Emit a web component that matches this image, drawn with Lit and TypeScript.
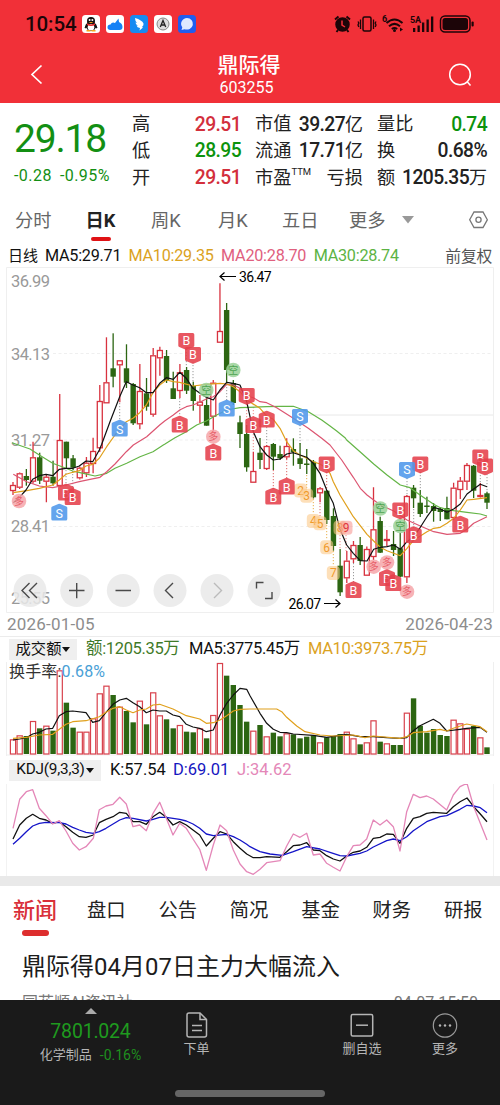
import { LitElement, html, svg, css } from "lit";
import { customElement } from "lit/decorators.js";

type Pt = [number, number];
const STEP = 6.676;
const X0 = 13;
const cx = (i: number) => X0 + STEP * i;

// up flag, body top, body bottom, wick top, wick bottom
const CANDLES: [number, number, number, number, number][] = [
  [1, 485, 491, 482, 495], [1, 473.3, 487.7, 472.5, 489], [0, 476, 480, 469, 485.7], [1, 457.3, 481.7, 441.7, 483.5],
  [0, 457.3, 480.7, 452.7, 484], [1, 476.7, 481.7, 475, 502.3], [0, 476.7, 483.3, 460.7, 485.7], [1, 440, 486, 394, 486],
  [0, 441.7, 458.3, 441.7, 468], [0, 458.3, 467.7, 455, 470], [1, 467.7, 478.3, 466.5, 479.5], [1, 462.7, 473.3, 457, 477],
  [1, 451, 464, 437.7, 473.3], [1, 401, 448.3, 385, 452], [1, 382.3, 403.3, 337.3, 403.3], [0, 368.3, 376.7, 333.3, 387.3],
  [1, 360.3, 365.3, 360.3, 402.3], [0, 368.3, 382.7, 344.3, 388], [0, 384, 423.3, 383, 425], [1, 391, 424.3, 364, 429.3],
  [0, 393.3, 406.7, 378, 410.7], [1, 355.3, 414.7, 348, 416.7], [1, 350, 358.3, 346.7, 375.7], [0, 356, 381, 350, 383],
  [0, 388.3, 399, 371.7, 399], [1, 372.3, 391, 364, 398], [0, 370, 390.7, 367, 394], [0, 386, 401, 381.7, 410.7],
  [1, 401.7, 405.7, 395, 423], [0, 405, 425.7, 396.7, 425.7], [1, 382.7, 416.7, 380, 431], [1, 331, 342.7, 283.3, 342.7],
  [0, 310, 370, 303, 383], [0, 383, 403, 380, 405], [0, 422.3, 434, 415.7, 448], [0, 434, 467.3, 425, 471.7],
  [1, 471, 482.7, 451.7, 482.7], [0, 452.7, 460, 438, 469], [1, 446, 469, 445, 470], [0, 444, 456.7, 443, 470],
  [0, 454, 458.3, 445.7, 460], [1, 446, 457.3, 438.3, 459.3], [0, 449, 452, 438.3, 465.7], [0, 458.3, 464, 443, 469],
  [0, 463.5, 465, 449, 474], [0, 461.7, 497.3, 460, 498.5], [1, 488.3, 493.3, 487, 502.3], [0, 490.7, 520, 490, 524],
  [0, 516, 546, 508.3, 550.7], [0, 565.7, 592.3, 549, 596], [1, 560.7, 578.3, 551, 583], [1, 545, 559.3, 541, 563],
  [0, 545, 561, 537, 565], [1, 549, 575.7, 546.5, 575.7], [1, 529.3, 557, 487.3, 560], [0, 521, 552.7, 516.7, 553],
  [1, 539, 541, 530, 546], [0, 544, 550, 531, 556], [0, 548.3, 576.7, 533, 577], [1, 496, 577.3, 495, 583],
  [0, 487.7, 498.3, 485, 508], [0, 502.7, 514, 490, 517], [0, 505.5, 507, 496.7, 513], [0, 506, 511, 503, 521.7],
  [0, 509, 512, 507, 521], [0, 508, 519.3, 496.7, 519.3], [1, 487.7, 518, 482.7, 520], [1, 480.7, 490, 477, 499],
  [1, 465, 481.7, 463, 490], [0, 465.7, 490.7, 465, 498], [1, 495, 496.7, 483, 497.5], [0, 493.3, 502.7, 491.7, 509],
];

// turnover bar tops, in thirds of a pixel below the panel origin (y = 635)
const VOLUME = [
  313, 301, 303, 258, 280, 272, 287, 106, 203, 278, 290, 290, 250, 175, 152, 180, 215, 228, 262, 197, 268, 172, 241, 253,
  280, 270, 290, 292, 280, 310, 240, 84, 122, 150, 210, 260, 287, 270, 304, 293, 304, 295, 298, 310, 305, 302, 322, 307,
  303, 297, 290, 310, 328, 322, 256, 320, 325, 330, 330, 233, 190, 272, 293, 282, 300, 303, 254, 265, 281, 273, 307, 337,
];

const seg = (ox: number, oy: number, ...v: number[]): Pt[] => {
  const out: Pt[] = [];
  for (let i = 0; i < v.length; i += 2) out.push([ox + v[i] / 3, oy + v[i + 1] / 3]);
  return out;
};

const poly = (p: Pt[], color: string, w = 1.2) =>
  svg`<polyline points=${p.map(([x, y]) => `${x.toFixed(1)},${y.toFixed(1)}`).join(" ")} fill="none" stroke=${color} stroke-width=${w} stroke-linejoin="round"/>`;

const MA5 = [
  ...seg(0, 440, 40, 188, 60, 170, 78, 150, 98, 118, 118, 107, 138, 103, 158, 107, 178, 88, 198, 85, 218, 85, 238, 78, 258, 63, 278, 65, 298, 30),
  ...seg(0, 265, 305, 538, 330, 470, 359, 395, 379, 350, 399, 360, 419, 368, 439, 383, 459, 383, 479, 355, 499, 338),
  ...seg(165, 265, 25, 343, 44, 322, 64, 340, 84, 370, 104, 384, 124, 397, 145, 405, 165, 375, 185, 352, 205, 355, 225, 360, 245, 410, 265, 500),
  ...seg(165, 440, 285, 20, 305, 45, 325, 60, 345, 57, 365, 42, 385, 38, 405, 45, 425, 52, 445, 70, 465, 100, 485, 150),
  ...seg(330, 440, 10, 190, 30, 268, 50, 315, 70, 340, 91, 362, 111, 363, 131, 328, 151, 322, 171, 320, 191, 315, 211, 328, 231, 305, 251, 290, 271, 262, 291, 230, 311, 203, 331, 207, 351, 217, 371, 207, 391, 192, 411, 162, 431, 147, 451, 133, 471, 140),
];
const MA10 = [
  ...seg(0, 440, 40, 158, 80, 152, 118, 145, 158, 135, 178, 120, 198, 103, 218, 97, 238, 92, 258, 78, 278, 73, 298, 55, 320, 20),
  ...seg(0, 265, 345, 510, 379, 470, 399, 460, 419, 443, 439, 420, 459, 383, 479, 360, 499, 345),
  ...seg(165, 265, 25, 350, 44, 352, 84, 363, 124, 358, 165, 355, 185, 357, 205, 365, 225, 380, 245, 405, 285, 430, 305, 453, 325, 463, 345, 490),
  ...seg(165, 440, 365, 5, 385, 32, 405, 45, 425, 55, 445, 65, 465, 72, 485, 85),
  ...seg(330, 440, 0, 100, 10, 125, 30, 165, 70, 230, 111, 283, 131, 303, 151, 322, 171, 332, 191, 340, 211, 347, 231, 325, 251, 300, 271, 288, 291, 275, 311, 265, 331, 262, 351, 250, 371, 235, 391, 210, 411, 180, 431, 178, 471, 173),
];
const MA20 = [
  ...seg(0, 440, 40, 103, 80, 125, 118, 138, 158, 143, 198, 135, 238, 125, 270, 118, 300, 112, 320, 95, 345, 72, 379, 35),
  ...seg(0, 265, 400, 540, 440, 515, 479, 480),
  ...seg(165, 265, 0, 467, 25, 450, 44, 435, 64, 425, 84, 420, 104, 412, 124, 402, 145, 395, 165, 380, 185, 358, 205, 360, 225, 370, 245, 392, 265, 398, 285, 410, 305, 413, 335, 428, 385, 460, 430, 490, 470, 520),
  ...seg(330, 440, 0, 15, 35, 60, 70, 112, 91, 145, 111, 165, 151, 195, 191, 213, 231, 240, 271, 258, 311, 275, 351, 283, 391, 280, 411, 268, 431, 250, 471, 230),
];
const MA30 = [
  ...seg(0, 440, 36, 8, 90, 27, 118, 45, 158, 70, 198, 85, 218, 93, 250, 100, 285, 108, 320, 100, 345, 85, 380, 70, 420, 50, 459, 35, 490, 15),
  ...seg(165, 265, 0, 537, 30, 518, 64, 500, 95, 480, 124, 468, 155, 450, 185, 435, 225, 428, 305, 425, 345, 424, 385, 424, 430, 440, 470, 465),
  ...seg(330, 265, 0, 483, 20, 498, 45, 518),
  ...seg(330, 440, 50, 0, 90, 35, 131, 72, 171, 105, 211, 135, 240, 143, 270, 165, 311, 193, 331, 203, 351, 208, 371, 212, 411, 217, 451, 222, 471, 228),
];
const VMA5 = [
  ...seg(0, 635, 39, 315, 59, 312, 79, 308, 98, 297, 118, 292, 138, 282, 158, 280, 178, 242, 198, 230, 218, 228, 258, 233, 278, 262, 298, 257, 318, 232, 339, 208, 359, 195, 379, 190, 399, 203, 419, 215, 439, 233, 459, 225, 479, 228, 499, 228, 519, 240, 539, 245, 559, 268, 579, 276, 599, 280, 619, 290, 640, 285, 660, 240, 680, 205, 700, 180, 720, 160, 740, 163),
  ...seg(250, 635, 0, 182, 30, 235, 50, 265, 70, 283, 90, 292, 110, 293, 130, 297, 190, 301, 230, 307, 290, 298, 330, 305, 370, 305, 410, 308, 450, 310, 470, 308, 490, 287, 510, 272, 550, 253, 570, 265, 590, 288, 630, 283, 650, 280, 690, 277, 711, 292),
];
const VMA10 = [
  ...seg(0, 635, 39, 310, 79, 307, 118, 300, 158, 298, 198, 268, 218, 260, 258, 257, 298, 245, 318, 232, 339, 220, 359, 215, 379, 225, 399, 233, 419, 225, 439, 222, 459, 210, 479, 208, 519, 222, 559, 242, 599, 252, 619, 265, 640, 263, 660, 255, 680, 242, 700, 228, 720, 223),
  ...seg(250, 635, 0, 222, 80, 222, 95, 230, 110, 247, 140, 273, 165, 290, 210, 300, 250, 303, 310, 300, 345, 308, 370, 303, 450, 310, 470, 305, 490, 293, 530, 290, 570, 283, 590, 288, 610, 280, 650, 267, 690, 275, 711, 290),
];
const K = [
  ...seg(0, 635, 39, 612, 59, 570, 79, 550, 98, 538, 118, 550, 138, 555, 158, 565, 178, 560, 198, 575, 218, 592, 238, 605, 258, 607, 280, 600, 298, 563, 318, 553, 339, 545, 359, 532, 379, 535, 399, 560, 419, 560, 439, 568, 459, 545, 479, 532, 499, 547, 519, 570, 539, 560, 559, 570, 579, 585, 599, 600, 619, 633, 640, 610, 660, 590, 680, 597, 700, 620, 720, 640, 740, 657),
  ...seg(250, 635, 10, 668, 30, 668, 50, 665, 90, 667, 110, 650, 130, 632, 150, 630, 170, 623, 190, 645, 210, 647, 230, 662, 250, 672, 270, 678, 290, 663, 310, 652, 330, 648, 350, 637, 370, 610, 390, 607, 410, 597, 430, 598, 450, 625, 470, 580, 490, 550, 510, 545, 530, 535, 550, 532, 590, 535, 610, 515, 630, 500, 651, 489, 671, 515, 691, 537, 711, 560),
];
const D = [
  ...seg(0, 635, 39, 628, 59, 610, 79, 590, 98, 573, 118, 565, 138, 562, 178, 563, 198, 567, 218, 577, 238, 585, 258, 592, 280, 595, 298, 590, 318, 580, 359, 555, 379, 548, 399, 550, 439, 558, 459, 553, 479, 547, 499, 547, 539, 553, 559, 558, 579, 567, 599, 580, 619, 597, 640, 602, 680, 598, 700, 605, 720, 615, 740, 628),
  ...seg(250, 635, 0, 635, 30, 650, 60, 657, 97, 661, 130, 650, 170, 635, 210, 642, 240, 652, 270, 662, 290, 663, 330, 655, 350, 648, 370, 636, 410, 617, 430, 612, 450, 617, 470, 605, 490, 587, 530, 560, 570, 545, 590, 542, 630, 523, 651, 511, 671, 513, 691, 518, 711, 533),
];
const J = [
  ...seg(0, 635, 39, 580, 59, 493, 79, 470, 98, 464, 118, 520, 138, 542, 158, 567, 178, 557, 198, 588, 218, 625, 238, 645, 258, 635, 280, 610, 298, 524, 318, 513, 339, 508, 359, 487, 379, 507, 399, 575, 419, 570, 439, 587, 459, 535, 479, 502, 499, 550, 519, 600, 539, 565, 559, 580, 579, 612, 599, 643, 619, 706, 640, 630, 660, 570, 680, 587, 700, 645, 720, 687, 740, 710),
  ...seg(250, 635, 10, 718, 30, 703, 50, 683, 90, 677, 110, 633, 130, 597, 150, 607, 170, 595, 190, 660, 210, 657, 230, 685, 250, 697, 270, 708, 290, 665, 310, 632, 330, 630, 350, 612, 370, 555, 390, 570, 410, 555, 430, 575, 450, 648, 470, 530, 490, 478, 510, 488, 530, 483, 550, 492, 590, 525, 610, 480, 630, 455, 651, 445, 671, 515, 711, 615),
];

// label, x, y, tip direction (-1 up, 1 down)
const FLAGS: [string, number, number, number][] = [
  ["B", 186.3, 341, 1], ["B", 193, 355, 1], ["B", 179.7, 424.5, -1], ["B", 253.3, 425, -1], ["B", 246.7, 396, 1],
  ["B", 266.7, 419.5, -1], ["B", 213.3, 452.5, -1], ["B", 273.3, 496.5, -1], ["B", 286.7, 486.5, -1], ["B", 326.7, 464.5, 1],
  ["B", 420.3, 464.5, 1], ["B", 400.3, 510.5, 1], ["B", 413.7, 535, -1], ["B", 460.3, 524.5, -1], ["B", 480.3, 457.5, 1],
  ["B", 485, 466.5, 1], ["B", 353.5, 590, -1], ["B", 387, 578, -1], ["B", 393.3, 583, -1], ["B", 66, 492.5, -1], ["B", 72.7, 497, -1],
  ["S", 119.7, 428.5, -1], ["S", 226.7, 408.5, -1], ["S", 300, 417, 1], ["S", 59.3, 512.5, -1], ["S", 407, 470, 1],
];
const DOTS: [string, number, number][] = [
  ["空", 206.3, 390], ["空", 233.3, 370], ["空", 380.3, 508.5], ["空", 400.3, 526],
  ["多", 213.3, 436.7], ["多", 19, 501], ["多", 373.7, 566.7], ["多", 387, 562.5], ["多", 407, 591.7],
];
const COUNTS: [string, number, number][] = [
  ["2", 300.5, 490.5], ["3", 306.7, 495.7], ["4", 313.3, 521], ["5", 320, 523.3], ["6", 326.7, 547.3], ["7", 333.3, 573], ["8", 340, 527.7], ["9", 346, 527.7],
];
// x, y1, y2, colour
const LEADERS: [number, number, number, string][] = [
  [66, 470, 486, "#999"], [72.7, 471, 490, "#999"], [119.7, 403, 420, "#999"], [186.3, 349, 367, "#999"], [193, 362, 382, "#999"],
  [179.7, 398, 416, "#999"], [226.7, 384, 401, "#999"], [253.3, 404, 450, "#e88"], [246.7, 404, 425, "#e88"], [266.7, 427, 452, "#999"],
  [273.3, 470, 489, "#d66"], [286.7, 459, 479, "#d66"], [300, 425, 446, "#999"], [326.7, 472, 490, "#d66"], [306.7, 475, 488, "#e9b04c"],
  [313.3, 499, 514, "#e9b04c"], [320, 503, 516, "#d66"], [326.7, 525, 540, "#e9b04c"], [333.3, 551, 566, "#e9b04c"], [340, 535, 549, "#e88"],
  [346, 535, 551, "#e88"], [353.5, 563, 582, "#999"], [420.3, 472, 490, "#999"], [407, 478, 495, "#999"], [413.7, 509, 528, "#999"],
  [480.3, 466, 483, "#999"], [487, 474, 492, "#999"], [400.3, 518, 533, "#999"],
];

const flag = ([t, x, y, d]: [string, number, number, number]) => svg`
  <g transform="translate(${x} ${y})">
    <path transform="scale(1 ${d})" d="M-6.5 -8 H6.500 Q8 -8 8 -6.500 V4.800 Q8 5.600 7 6 L1 8.600 Q0 9 -1 8.600 L-7 6 Q-8 5.600 -8 4.800 V-6.500 Q-8 -8 -6.500 -8Z"
      fill=${t === "B" ? "#e5404b" : "#4f97ea"} fill-opacity=".88"/>
    <text y=${d > 0 ? 4 : 5} text-anchor="middle" font-size="12.5" fill="#fff">${t}</text>
  </g>`;

@customElement("app-root")
export class AppRoot extends LitElement {
  static styles = css`
    :host { display: block; width: 500px; height: 1105px; overflow: hidden; background: #fff; color: #222;
      font-family: Roboto, "Noto Sans CJK SC", sans-serif; line-height: 1; }
    svg { display: block; }
    svg text { font-family: Roboto, "Noto Sans CJK SC", sans-serif; }
    .page { display: flex; flex-direction: column; height: 1105px; }
    .top { background: #f13038; height: 103px; flex: none; }
    .status { display: flex; align-items: center; height: 48px; padding: 0 24px 0 25px; box-sizing: border-box; }
    .time { font-size: 20.5px; font-weight: 500; color: #1c0508; width: 57px; letter-spacing: -.1px; white-space: nowrap; }
    .apps { display: flex; gap: 6px; flex: 1; }
    .nav { display: grid; grid-template-columns: 60px 1fr 60px; height: 53px; align-items: center; color: #fff; padding: 0 10px 0 7px; }
    .nav .ttl { display: flex; flex-direction: column; align-items: center; gap: 4px; padding-left: 1px; padding-top: 1px; }
    .nav .name { font-size: 21px; font-weight: 500; }
    .nav .code { font-size: 16px; margin-right: 5px; }
    .nav .l { justify-self: center; } .nav .r { justify-self: center; }
    .quote { display: flex; height: 94px; flex: none; padding: 0 13px 0 14px; box-sizing: border-box; }
    .price { width: 118px; flex: none; color: #138f13; }
    .big { font-size: 39px; padding-top: 17px; letter-spacing: -1.2px; }
    .chg { display: flex; gap: 8px; font-size: 16px; letter-spacing: .45px; padding-top: 9px; }
    .col { padding-top: 8px; flex: none; }
    .c1 { width: 109px; } .c2 { width: 108px; margin-left: 14px; } .c3 { width: 110px; margin-left: 14px; }
    .row { display: flex; justify-content: space-between; align-items: center; height: 26.7px; font-size: 18.2px; white-space: nowrap; }
    .v { font-size: 19.3px; font-weight: 500; letter-spacing: -.6px; }
    .v i { font-style: normal; font-weight: 400; font-size: 18px; letter-spacing: 0; }
    .red { color: #d32f3c; } .green { color: #0c930c; }
    sup { font-size: 9.5px; vertical-align: 9px; line-height: 0; }
    .tabs { display: flex; height: 47px; flex: none; align-items: flex-start; padding: 5px 12px 0 15px; box-sizing: border-box; color: #666; font-size: 18.3px; }
    .tab { height: 40px; line-height: 38px; box-sizing: border-box; white-space: nowrap; display: flex; flex-direction: column; align-items: flex-start; }
    .tab span { height: 35px; }
    .tab.on { color: #222; font-weight: 700; align-items: center; }
    .tab.on b { width: 20px; height: 4px; border-radius: 2px; background: #e01215; flex: none; }
    .legend { display: flex; height: 23px; flex: none; align-items: center; padding: 2px 8px 0; box-sizing: border-box; font-size: 16.2px; color: #111; white-space: nowrap; letter-spacing: -.25px; }
    .legend span:first-child { font-size: 15px; width: 37px; letter-spacing: 0; }
    .legend .m5 { width: 83.500px; } .legend .m { width: 92.600px; }
    .legend .last { margin-left: auto; color: #555; font-size: 15.8px; }
    .or { color: #dba21e; } .pk { color: #e0607e; } .gr { color: #5cb344; }
    .dates { display: flex; justify-content: space-between; align-items: center; height: 23px; flex: none; padding: 0 7px; color: #8d8d8d; font-size: 17px; letter-spacing: .2px; }
    .sub { display: flex; align-items: center; flex: none; padding: 0 9px; font-size: 16.5px; white-space: nowrap; color: #111; }
    .vh { height: 26px; box-sizing: border-box; border-top: 1px solid #ececec; }
    .vh > span { letter-spacing: -.35px; }
    .kh { height: 28px; }
    .btn { background: #efefef; display: flex; align-items: center; justify-content: center; gap: 1px; height: 21px; font-size: 15.3px; flex: none; }
    .kh .btn { letter-spacing: -.2px; }
    .btn i { border: 4px solid transparent; border-top: 5px solid #111; border-bottom: 0; }
    .sep { height: 10px; background: #e9e9e9; flex: none; }
    .ntabs { display: flex; flex: none; height: 50px; padding-left: 13px; font-size: 19.3px; color: #222; }
    .ntabs div { width: 71.4px; line-height: 50px; white-space: nowrap; flex: none; }
    .ntabs .on { width: 74px; font-size: 22px; font-weight: 500; color: #d9303a; display: flex; flex-direction: column; }
    .ntabs .on span { height: 44px; line-height: 49px; }
    .ntabs .on b { width: 27px; height: 6px; margin-left: 9px; border-radius: 3px; background: #dd2e2e; flex: none; }
    .news { flex: 1; min-height: 0; overflow: hidden; padding: 18px 22px 0; }
    .headline { font-size: 23.9px; line-height: 26px; letter-spacing: .1px; white-space: nowrap; color: #1c1c1c; }
    .meta { display: flex; justify-content: space-between; font-size: 16px; line-height: 20px; color: #777; margin-top: 13px; }
    .bar { background: #1a1a1a; height: 105px; flex: none; display: flex; flex-direction: column; color: #b5b5b5; }
    .acts { display: grid; grid-template-columns: 181px 31px 99px 102px 64px; height: 90px; font-size: 13px; }
    .act { display: flex; flex-direction: column; align-items: center; white-space: nowrap; }
    .act svg { margin: 12px 0 4px; }
    .idx { color: #1f9a1f; font-size: 19.5px; letter-spacing: -.2px; margin-top: 8px; }
    .pct { display: flex; gap: 8px; margin-top: 6px; align-items: center; color: #b5b5b5; }
    .pct em { font-style: normal; color: #1f8f1f; font-size: 14px; }
    .tri { border: 6px solid transparent; border-bottom: 6px solid #aaa; border-top: 0; margin-top: 8px; }
    .home { width: 150px; height: 7px; border-radius: 4px; background: #666; align-self: center; }
  `;

  private kline() {
    return html`<svg width="500" height="346" viewBox="0 267 500 346">
      <g fill="none" stroke="#efefef">
        <path d="M6.500 612.500V267.500H493.500V612.500Z"/>
        <path d="M300 415H493" stroke="#e8e8e8"/>
        <path d="M53 353.500H493M53 440H493M53 526.500H493" stroke-dasharray="3 2.500"/>
      </g>
      <g font-size="16.5" fill="#999">
        <text x="11" y="286.500" textLength="39">36.99</text>
        <text x="11" y="359.500" textLength="39">34.13</text>
        <text x="11" y="446" textLength="39">31.27</text>
        <text x="11" y="532" textLength="39">28.41</text>
        <text x="11" y="604" textLength="39">25.55</text>
      </g>
      ${LEADERS.map(([x, a, b, c]) => svg`<path d="M${x} ${a}V${b}" stroke=${c} stroke-dasharray="1.2 1.8"/>`)}
      ${CANDLES.map(([up, t, b, wt, wb], i) => {
        const x = cx(i);
        return up
          ? svg`<g stroke="#d8323f" stroke-width="1.3"><path d="M${x} ${wt}V${t}M${x} ${b}V${wb}"/>
              <rect x=${x - 2.5} y=${t + 0.5} width="5" height=${Math.max(1, b - t - 1)} fill="#fff"/></g>`
          : svg`<g fill="#2c6612"><rect x=${x - 0.65} y=${wt} width="1.3" height=${wb - wt}/>
              <rect x=${x - 2.7} y=${t} width="5.4" height=${b - t}/></g>`;
      })}
      ${poly(MA30, "#64b546")}${poly(MA20, "#dc5571")}${poly(MA10, "#e0a01c")}${poly(MA5, "#111")}
      ${DOTS.map(([t, x, y]) => {
        const g = t === "空";
        return svg`<circle cx=${x} cy=${y} r="7.3" fill=${g ? "#9ad198" : "#f6a6a9"} fill-opacity=".85"/>
          <text x=${x} y=${y + 3.6} text-anchor="middle" font-size="10" fill=${g ? "#4fa551" : "#e8606a"}>${t}</text>`;
      })}
      ${COUNTS.map(([t, x, y]) => svg`
        <rect x=${x - 6.5} y=${y - 7} width="13" height="14" rx="4" fill=${t === "9" ? "#f79a94" : "#fcc98a"} fill-opacity=".6"/>
        <text x=${x} y=${y + 4.2} text-anchor="middle" font-size="12" fill=${t === "9" ? "#e0343c" : "#f09a2c"}>${t}</text>`)}
      ${FLAGS.map(flag)}
      <g fill="none" stroke="#000" stroke-width="1.2">
        <path d="M236 276.500H220M224.500 272.500L220 276.500L224.500 280.500"/>
        <path d="M324 603.500H340M335.500 599.500L340 603.500L335.500 607.500"/>
      </g>
      <g font-size="14" fill="#000">
        <text x="239" y="281.500" textLength="32.500">36.47</text>
        <text x="288.500" y="608.500" textLength="32.500">26.07</text>
      </g>
      ${[30, 76.7, 123.3, 170, 217, 264].map((x) => svg`<circle cx=${x} cy="590.5" r="16.5" fill="#e9e9e9" fill-opacity=".85"/>`)}
      <g fill="none" stroke="#4a4a4a" stroke-width="1.4">
        <path d="M29.500 583L22 590.500L29.500 598M37 583L29.500 590.500L37 598"/>
        <path d="M69 590.500H84.500M76.700 583V598.300M115.500 590.500H131"/>
        <path d="M173 583L165.500 590.500L173 598"/>
        <path d="M214 583L221.500 590.500L214 598" stroke="#bbb"/>
        <path d="M256.500 588.500V582.500H263.500M272 592V598.500H265"/>
      </g>
    </svg>`;
  }

  private volume() {
    return html`<svg width="500" height="94" viewBox="0 662 500 94">
      <path d="M6.500 662V756M493.500 662V756M6 755H494" stroke="#efefef"/>
      ${VOLUME.map((v, i) => {
        const y = 635 + v / 3;
        const x = cx(i);
        return CANDLES[i][0]
          ? svg`<rect x=${x - 2.6} y=${y + 0.5} width="5.2" height=${753.5 - y} fill="#fff" fill-opacity=".7" stroke="#d8424d" stroke-width="1.2"/>`
          : svg`<rect x=${x - 2.7} y=${y} width="5.4" height=${754 - y} fill="#2c6612"/>`;
      })}
      <text x="9" y="677" font-size="16" fill="#333" textLength="96">换手率:<tspan fill="#4a9fd6">0.68%</tspan></text>
      ${poly(VMA5, "#111")}${poly(VMA10, "#e0a01c")}
    </svg>`;
  }

  private kdj() {
    return html`<svg width="500" height="92" viewBox="0 784 500 92">
      <path d="M6.500 784V876M493.500 784V876" stroke="#f2f2f2"/>
      ${poly(K, "#111", 1.3)}${poly(D, "#1414c8", 1.3)}${poly(J, "#e487b8", 1.3)}
    </svg>`;
  }

  render() {
    return html`<div class="page">
      <div class="top">
        <div class="status">
          <span class="time">10:54</span>
          <div class="apps">
            <svg width="18" height="18" viewBox="0 0 18 18"><rect width="18" height="18" rx="3.5" fill="#fff"/><ellipse cx="9" cy="11" rx="5" ry="5" fill="#111"/><path d="M4.500 9L3 13L5 12M13.500 9L15 13L13 12" fill="#111" stroke="#111"/><circle cx="9" cy="6" r="4" fill="#111"/><ellipse cx="9" cy="12.300" rx="3.300" ry="3.300" fill="#fff"/><circle cx="7.600" cy="5" r="1" fill="#fff"/><circle cx="10.400" cy="5" r="1" fill="#fff"/><path d="M5 8.300Q9 10.500 13 8.300V10Q9 12 5 10Z" fill="#e02828"/><path d="M6.500 7H11.500L9 8.200Z" fill="#f6a51c"/><path d="M4.500 15.800H8.500M9.500 15.800H13.500" stroke="#f6a51c" stroke-width="1.400"/></svg>
            <svg width="18" height="18" viewBox="0 0 18 18"><rect width="18" height="18" rx="3.5" fill="#fff"/><path d="M4.500 15Q1.500 15 1.500 12.300Q1.500 9.500 4.500 9.500Q6 6.500 9 8L12.500 3.500L13 7Q16.500 8.500 16.500 12Q16.500 15 13.500 15Z" fill="#1681f5"/></svg>
            <svg width="18" height="18" viewBox="0 0 18 18"><rect width="18" height="18" rx="3.5" fill="#168bf2"/><path d="M5 3Q12 5 13.500 8.500Q14 10 12 12L13 12.500L9.500 15.500L10 13Q7 12.500 6.500 10.500L8 10.700Q5.500 9.500 5.500 7.500L7 8Q5 6 5 3Z" fill="#fff"/></svg>
            <svg width="18" height="18" viewBox="0 0 18 18"><rect width="18" height="18" rx="3.5" fill="#fff"/><circle cx="9" cy="9" r="6" fill="#ddd" stroke="#888" stroke-width="1"/><path d="M6.300 12L9 5.500L11.700 12M7.200 10H10.800" fill="none" stroke="#222" stroke-width="1.300"/></svg>
            <svg width="18" height="18" viewBox="0 0 18 18"><rect width="18" height="18" rx="3.5" fill="#1f5df0"/><path d="M9 3A6.200 5.800 0 1 1 6.500 14.200L3.500 15L4.300 12.200A6.200 5.800 0 0 1 9 3Z" fill="#dfe9ff"/></svg>
          </div>
          <svg width="142" height="20" viewBox="334 14 142 20">
            <g fill="none" stroke="#1c0508" stroke-width="1.500">
              <circle cx="342.500" cy="24.500" r="6.500" fill="#1c0508"/><path d="M335 19.500L338.500 16.500M350 19.500L346.500 16.500M338 30L336.500 32M347 30L348.500 32" stroke-width="2"/>
              <path d="M342 20.500V25L345 27" stroke="#f13038"/>
              <rect x="363" y="17" width="8" height="14" rx="1.500"/><path d="M360.500 19.500V29M373.500 19.500V29M358 21.500L358.800 23L358 25L358.800 27M376 21.500L375.200 23L376 25L375.200 27" stroke-width="1.300"/>
              <path d="M386.500 23Q394.500 16 402.500 23M389 26.200Q394.500 21.500 400 26.200M391.800 29Q394.500 27 397.200 29" stroke-width="2"/>
              <rect x="440.500" y="16" width="29.500" height="16" rx="4.500"/>
            </g>
            <g fill="#1c0508">
              <circle cx="394.500" cy="30.500" r="1.500"/><path d="M400 31.500V27.500L403 29.500Z"/>
              <text x="382" y="22" font-size="9" font-weight="700">6</text>
              <text x="410" y="23" font-size="9" font-weight="700" textLength="11">5A</text>
              <rect x="413" y="28" width="2.300" height="4"/><rect x="417.500" y="25.500" width="2.300" height="6.500"/><rect x="422" y="22.500" width="2.300" height="9.500"/><rect x="426.500" y="19.500" width="2.300" height="12.500"/><rect x="431" y="16.500" width="2.300" height="15.500"/>
              <rect x="442.500" y="18" width="25.500" height="12" rx="2.500"/><rect x="471.500" y="21.500" width="2.200" height="5" rx="1"/>
            </g>
          </svg>
        </div>
        <div class="nav">
          <svg class="l" width="16" height="22" viewBox="0 0 16 22"><path d="M12.500 1.500L3 10.500L12.500 19.500" fill="none" stroke="#fff" stroke-width="1.700"/></svg>
          <div class="ttl"><span class="name">鼎际得</span><span class="code">603255</span></div>
          <svg class="r" width="26" height="26" viewBox="0 0 26 26"><g fill="none" stroke="#fff" stroke-width="1.500"><circle cx="13" cy="12.500" r="10.300"/><path d="M20 19.500L23.500 23.500"/></g></svg>
        </div>
      </div>

      <div class="quote">
        <div class="price"><div class="big">29.18</div><div class="chg"><span>-0.28</span><span>-0.95%</span></div></div>
        <div class="col c1">
          <div class="row"><span>高</span><span class="v red">29.51</span></div>
          <div class="row"><span>低</span><span class="v green">28.95</span></div>
          <div class="row"><span>开</span><span class="v red">29.51</span></div>
        </div>
        <div class="col c2">
          <div class="row"><span>市值</span><span class="v">39.27<i>亿</i></span></div>
          <div class="row"><span>流通</span><span class="v">17.71<i>亿</i></span></div>
          <div class="row"><span>市盈<sup>TTM</sup></span><span>亏损</span></div>
        </div>
        <div class="col c3">
          <div class="row"><span>量比</span><span class="v green">0.74</span></div>
          <div class="row"><span>换</span><span class="v">0.68%</span></div>
          <div class="row"><span>额</span><span class="v">1205.35<i>万</i></span></div>
        </div>
      </div>

      <div class="tabs">
        <div class="tab" style="width:71px"><span>分时</span></div>
        <div class="tab on" style="width:29px"><span>日K</span><b></b></div>
        <div class="tab" style="width:67px;margin-left:36px"><span>周K</span></div>
        <div class="tab" style="width:64px"><span>月K</span></div>
        <div class="tab" style="width:67px"><span>五日</span></div>
        <div class="tab" style="width:53px"><span>更多</span></div>
        <svg width="86" height="40" viewBox="0 -1.500 86 40"><path d="M0 12.500H12L6 20Z" fill="#999"/><g fill="none" stroke="#777" stroke-width="1.300"><path d="M72 8.500H81L85.300 16.300L81 24H72L67.700 16.300Z"/><circle cx="76.500" cy="16.300" r="2.600"/></g></svg>
      </div>
      <div class="legend"><span>日线</span><span class="m5">MA5:29.71</span><span class="m or">MA10:29.35</span><span class="m pk">MA20:28.70</span><span class="m gr">MA30:28.74</span><span class="last">前复权</span></div>
      ${this.kline()}
      <div class="dates"><span>2026-01-05</span><span>2026-04-23</span></div>
      <div class="sub vh">
        <div class="btn" style="width:68px"><span>成交额</span><i></i></div>
        <span style="width:103px;margin-left:9px;color:#3f7a28">额:1205.35万</span><span style="width:119px">MA5:3775.45万</span><span class="or">MA10:3973.75万</span>
      </div>
      ${this.volume()}
      <div class="sub kh">
        <div class="btn" style="width:92px"><span>KDJ(9,3,3)</span><i></i></div>
        <span style="width:63px;margin-left:9px">K:57.54</span><span style="width:64px;color:#1616c0">D:69.01</span><span style="color:#e487b8">J:34.62</span>
      </div>
      ${this.kdj()}
      <div class="sep"></div>
      <div class="ntabs">
        <div class="on"><span>新闻</span><b></b></div>
        ${["盘口", "公告", "简况", "基金", "财务", "研报"].map((t) => html`<div>${t}</div>`)}
      </div>
      <div class="news">
        <div class="headline">鼎际得04月07日主力大幅流入</div>
        <div class="meta"><span>同花顺AI资讯社</span><span>04-07 15:50</span></div>
      </div>
      <div class="bar">
        <div class="acts">
          <div class="act"><div class="tri"></div><div class="idx">7801.024</div><div class="pct"><span>化学制品</span><em>-0.16%</em></div></div>
          <div class="act"><svg width="22" height="26" viewBox="0 0 22 26"><g fill="none" stroke="#b5b5b5" stroke-width="1.500"><path d="M3 1H14L20.500 7.500V23Q20.500 25 18.500 25H3Q1 25 1 23V3Q1 1 3 1Z"/><path d="M14 1V7.500H20.500M6 13.500H16M6 18.500H16"/></g></svg>下单</div>
          <div></div>
          <div class="act"><svg width="24" height="26" viewBox="0 0 24 26"><g fill="none" stroke="#b5b5b5" stroke-width="1.500"><rect x="1.200" y="2.500" width="21.500" height="21.500" rx="1.500"/><path d="M6 13.200H18"/></g></svg>删自选</div>
          <div class="act"><svg width="26" height="26" viewBox="0 0 26 26"><circle cx="13" cy="13.500" r="11.700" fill="none" stroke="#9a9a9a" stroke-width="1.200"/><g fill="#b5b5b5"><circle cx="8" cy="13.500" r="1.200"/><circle cx="13" cy="13.500" r="1.200"/><circle cx="18" cy="13.500" r="1.200"/></g></svg>更多</div>
        </div>
        <div class="home"></div>
      </div>
    </div>`;
  }
}
